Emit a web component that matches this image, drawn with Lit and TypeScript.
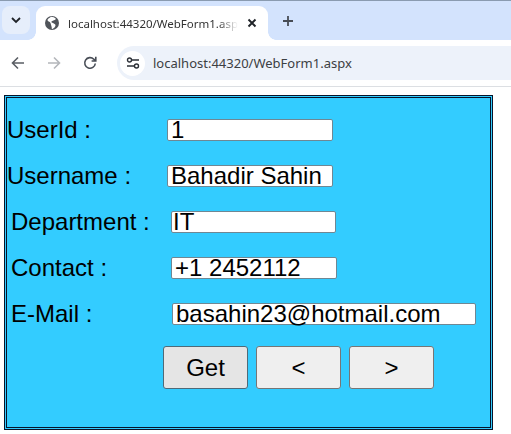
import { LitElement, html, css } from "lit";
import { customElement } from "lit/decorators.js";

@customElement("app-root")
export class AppRoot extends LitElement {
  static styles = css`
    :host { display: block; width: 511px; height: 434px; overflow: hidden; background: #fff; font-family: "Liberation Sans", Arial, sans-serif; }
    .strip { height: 40px; box-sizing: border-box; border-top: 1px solid #8a9bb0; background: #d3e3fd; display: flex; align-items: flex-end; }
    .tabmenu { width: 28px; height: 28px; margin: 0 6px 6px 2px; border-radius: 8px; background: #e6eefb; display: flex; align-items: center; justify-content: center; }
    .tab { width: 232px; height: 34px; background: #fff; border-radius: 9px 9px 0 0; display: flex; align-items: center; box-sizing: border-box; padding-left: 9px; position: relative; }
    .tab::before, .tab::after { content: ""; position: absolute; bottom: 0; width: 8px; height: 8px; }
    .tab::before { left: -8px; background: radial-gradient(circle at 0 0, #d3e3fd 7.5px, #fff 8px); }
    .tab::after { right: -8px; background: radial-gradient(circle at 100% 0, #d3e3fd 7.5px, #fff 8px); }
    .globe { flex: none; margin-top: -1px; }
    .tabtitle { font: 11.500px "Noto Sans", sans-serif; color: #333; margin-left: 9px; width: 170px; white-space: nowrap; overflow: hidden; -webkit-mask-image: linear-gradient(to right, #000 150px, transparent 170px); mask-image: linear-gradient(to right, #000 150px, transparent 170px); }
    .close { margin-left: 8px; display: flex; margin-top: -1px; }
    .plus { margin: 0 0 6px 10px; width: 20px; height: 27px; display: flex; align-items: center; justify-content: center; }
    .toolbar { height: 47px; background: #fff; border-bottom: 1px solid #dcdfe3; display: flex; align-items: center; box-sizing: border-box; }
    .nav { width: 18px; margin-left: 9px; margin-right: 18px; display: flex; justify-content: center; }
    .nav + .nav { margin-left: 0; }
    .address { flex: 1; height: 34px; background: #edf2fa; border-radius: 17px 0 0 17px; display: flex; align-items: center; padding-left: 3px; }
    .sitebtn { width: 25px; height: 25px; border-radius: 13px; background: #fff; display: flex; align-items: center; justify-content: center; }
    .url { font: 13px "Noto Sans", sans-serif; color: #3c4043; margin-left: 8px; }
    .panel { margin: 8px 0 0 4px; width: 489px; height: 335px; box-sizing: border-box; border: 3px double #06142a; background: #33ccff; padding-top: 21px; }
    .row { height: 46px; display: flex; align-items: flex-start; }
    .row.shift { padding-left: 4px; }
    .label { font-size: 24px; line-height: 28px; color: #000; width: 160px; flex: none; margin-top: -3px; }
    .box { height: 22px; box-sizing: border-box; border: 1px solid #6f8793; border-radius: 2px; background: #fff; font-size: 24px; line-height: 20px; padding-left: 3px; color: #000; white-space: nowrap; }
    .w1 { width: 166px; }
    .w2 { width: 165px; padding-left: 1px; }
    .w3 { width: 166px; }
    .w5 { width: 304px; margin-left: 1px; }
    .buttons { display: flex; gap: 8px; padding-left: 156px; margin-top: -3px; }
    .btn { width: 85px; height: 43px; box-sizing: border-box; border: 1px solid #767676; border-radius: 3px; background: #efefef; font-size: 24px; color: #000; display: flex; align-items: center; justify-content: center; }
    .btn.active { background: #e5e5e5; border-color: #4f6a78; }
  `;

  render() {
    return html`
      <div class="strip">
        <div class="tabmenu">
          <svg width="12" height="12" viewBox="0 0 12 12"><path d="M2 4 6 8l4-4" fill="none" stroke="#1f2328" stroke-width="1.800"/></svg>
        </div>
        <div class="tab">
          <svg class="globe" width="14" height="14" viewBox="0 0 14 14">
            <circle cx="7" cy="7" r="7" fill="#50545a"/>
            <path d="M6 .8C5 1.800 2.500 2.500 2.500 4S5 5.500 5.500 7 6 9 6.500 10.500 6.500 12.500 7 13.300c1.500-.8 3.500-2.300 3.500-3.800S9 7.500 8 7s-2-.5-1.500-1.500S9.500 4.500 11 3C9.800 1.700 8 .8 6 .8Z" fill="#fff"/>
          </svg>
          <div class="tabtitle">localhost:44320/WebForm1.aspx</div>
          <div class="close"><svg width="12" height="12" viewBox="0 0 12 12"><path d="M2.500 2.500l7 7M9.500 2.500l-7 7" stroke="#1f2328" stroke-width="1.900"/></svg></div>
        </div>
        <div class="plus"><svg width="12" height="12" viewBox="0 0 12 12"><path d="M6 1v10M1 6h10" stroke="#474c55" stroke-width="1.800"/></svg></div>
      </div>
      <div class="toolbar">
        <div class="nav"><svg width="14" height="14" viewBox="0 0 14 14"><path d="M13 7H2M7 1.500 1.500 7 7 12.500" fill="none" stroke="#5a5e64" stroke-width="1.600"/></svg></div>
        <div class="nav"><svg width="14" height="14" viewBox="0 0 14 14"><path d="M1 7h11M7 1.500 12.500 7 7 12.500" fill="none" stroke="#b4b7bb" stroke-width="1.600"/></svg></div>
        <div class="nav"><svg width="14" height="14" viewBox="0 0 14 14"><path d="M12.300 7.500A5.300 5.300 0 1 1 10.800 3.200L12.800 5M12.800 .8V5H8.600" fill="none" stroke="#474c55" stroke-width="1.600"/></svg></div>
        <div class="address">
          <div class="sitebtn">
            <svg width="14" height="12" viewBox="0 0 14 12"><path d="M6 3h7M1 9h7" stroke="#2b2f36" stroke-width="1.400"/><circle cx="3.500" cy="3" r="2" fill="none" stroke="#2b2f36" stroke-width="1.400"/><circle cx="10.500" cy="9" r="2" fill="none" stroke="#2b2f36" stroke-width="1.400"/></svg>
          </div>
          <div class="url">localhost:44320/WebForm1.aspx</div>
        </div>
      </div>
      <div class="panel">
        <div class="row"><div class="label">UserId :</div><div class="box w1">1</div></div>
        <div class="row"><div class="label">Username :</div><div class="box w1">Bahadir Sahin</div></div>
        <div class="row shift"><div class="label">Department :</div><div class="box w2">IT</div></div>
        <div class="row shift"><div class="label">Contact :</div><div class="box w3">+1 2452112</div></div>
        <div class="row shift"><div class="label">E-Mail :</div><div class="box w5">basahin23@hotmail.com</div></div>
        <div class="buttons">
          <div class="btn active">Get</div><div class="btn">&lt;</div><div class="btn">&gt;</div>
        </div>
      </div>
    `;
  }
}
